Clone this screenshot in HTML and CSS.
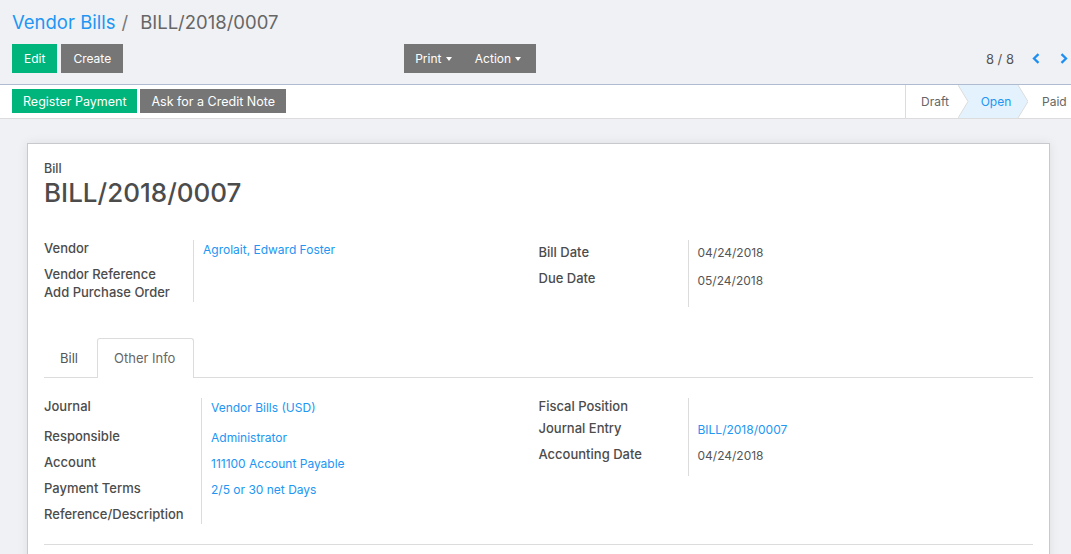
FILE: index.html
```html
<!DOCTYPE html>
<html>
<head>
<meta charset="utf-8">
<link rel="stylesheet" href="styles.css">
</head>
<body>
<div class="cp">
  <div class="crumbs"><a class="crumb-link">Vendor Bills</a><span class="crumb-sep">/</span><span class="crumb-cur">BILL/2018/0007</span></div>
  <div class="cp-row">
    <div class="btns">
      <button class="btn btn-green">Edit</button>
      <button class="btn btn-grey">Create</button>
    </div>
    <div class="sidebar">
      <button class="btn btn-grey dd">Print <span class="caret"></span></button>
      <button class="btn btn-grey dd">Action <span class="caret"></span></button>
    </div>
    <div class="pager">
      <span class="pager-val">8 / 8</span>
      <svg class="chev" width="8" height="11" viewBox="0 0 8 11"><path d="M6.5 1.2 L2 5.5 L6.5 9.8" fill="none" stroke="#1e8ff0" stroke-width="2.3"/></svg>
      <svg class="chev chev-r" width="8" height="11" viewBox="0 0 8 11"><path d="M1.5 1.2 L6 5.5 L1.5 9.8" fill="none" stroke="#1e8ff0" stroke-width="2.3"/></svg>
    </div>
  </div>
</div>
<div class="statusbar">
  <div class="sb-btns">
    <button class="btn btn-green sm">Register Payment</button>
    <button class="btn btn-grey sm">Ask for a Credit Note</button>
  </div>
  <div class="steps">
    <div class="step step-draft">Draft</div>
    <div class="step step-open">
      <svg class="step-bg" width="70" height="33" viewBox="0 0 70 33" preserveAspectRatio="none">
        <polygon points="0,0 60,0 70,16.5 60,33 0,33 10,16.5" fill="#e3f2fd"/>
        <polyline points="0,0 10,16.5 0,33" fill="none" stroke="#dcdcdc" stroke-width="1"/>
        <polyline points="60,0 70,16.5 60,33" fill="none" stroke="#dcdcdc" stroke-width="1"/>
      </svg>
      <span class="step-label">Open</span>
    </div>
    <div class="step step-paid">Paid</div>
  </div>
</div>
<div class="content">
  <div class="sheet">
    <div class="sub-title">Bill</div>
    <div class="title">BILL/2018/0007</div>
    <div class="group">
      <div class="col g1l">
        <div class="lbl">Vendor</div><div class="val link p2">Agrolait, Edward Foster</div>
        <div class="lbl">Vendor Reference</div><div class="val"></div>
        <div class="lbl">Add Purchase Order</div><div class="val"></div>
      </div>
      <div class="col g1r">
        <div class="lbl p4">Bill Date</div><div class="val p5">04/24/2018</div>
        <div class="lbl p4">Due Date</div><div class="val p6">05/24/2018</div>
        <div class="lbl"></div><div class="val"></div>
      </div>
    </div>
    <div class="tabs">
      <div class="tab">Bill</div>
      <div class="tab tab-active">Other Info</div>
    </div>
    <div class="group group2">
      <div class="col g2l">
        <div class="lbl">Journal</div><div class="val link p2">Vendor Bills (USD)</div>
        <div class="lbl">Responsible</div><div class="val link p2">Administrator</div>
        <div class="lbl">Account</div><div class="val link p2">111100 Account Payable</div>
        <div class="lbl">Payment Terms</div><div class="val link p2">2/5 or 30 net Days</div>
        <div class="lbl">Reference/Description</div><div class="val"></div>
      </div>
      <div class="col g2r">
        <div class="lbl">Fiscal Position</div><div class="val"></div>
        <div class="lbl">Journal Entry</div><div class="val link p2">BILL/2018/0007</div>
        <div class="lbl">Accounting Date</div><div class="val p1">04/24/2018</div>
      </div>
    </div>
    <div class="hr"></div>
  </div>
</div>
</body>
</html>
```
FILE: styles.css
```css
* { box-sizing: border-box; }
html, body { margin: 0; padding: 0; }
html { overflow: hidden; }
body {
  background: #f0f1f5;
  font-family: Inter, "Open Sans", Arial, sans-serif;
  color: #4c4c4c;
  width: 1071px;
  height: 554px;
  overflow: hidden;
}
.cp {
  padding: 0 0 11px 12px;
  border-bottom: 1px solid #aebbd0;
}
.crumbs {
  padding-top: 11px;
  height: 44px;
  line-height: 22px;
  font-size: 18.5px;
}
.crumb-link { color: #2196f3; }
.crumb-sep { color: #777; margin: 0 12px 0 6px; }
.crumb-cur { color: #666; }
.cp-row {
  display: flex;
  align-items: center;
  height: 29px;
}
.btns { display: flex; gap: 4px; }
.btn {
  border: 0;
  font-family: Inter, "Open Sans", Arial, sans-serif;
  font-size: 12px;
  color: #fff;
  height: 29px;
  padding: 0 12px;
  cursor: pointer;
}
.btn-green { background: #00b57c; }
.btn-grey { background: #767676; }
.sidebar { display: flex; margin-left: 281px; background: #767676; }
.dd { padding: 0 11px; }
.dd + .dd { padding-left: 12px; padding-right: 15px; }
.caret {
  display: inline-block;
  width: 0; height: 0;
  border-left: 3.5px solid transparent;
  border-right: 3.5px solid transparent;
  border-top: 4px solid #fff;
  vertical-align: middle;
  margin-left: 1px;
  margin-bottom: 2px;
}
.pager {
  margin-left: auto;
  display: flex;
  align-items: center;
  padding-right: 3px;
  font-size: 13px;
  color: #555;
}
.pager-val { margin-right: 18px; }
.chev-r { margin-left: 20px; }
.statusbar {
  background: #fff;
  height: 34px;
  border-bottom: 1px solid #dcdcdc;
  display: flex;
  justify-content: space-between;
}
.sb-btns { display: flex; gap: 3px; padding: 4px 0 0 12px; }
.btn.sm { height: 24px; padding: 0 11px; font-size: 12.5px; }
.steps { display: flex; height: 33px; }
.step {
  font-size: 12px;
  line-height: 33px;
  color: #666;
}
.step-draft {
  border-left: 1px solid #dcdcdc;
  width: 53px;
  padding-left: 15px;
}
.step-open {
  position: relative;
  width: 70px;
  text-align: center;
  color: #2196f3;
}
.step-bg { position: absolute; left: 0; top: 0; }
.step-label { position: relative; padding-left: 6px; }
.step-paid { padding-left: 14px; width: 43px; }
.content {
  padding: 24px 21px 0 27px;
  height: 435px;
  overflow: hidden;
}
.sheet {
  background: #fff;
  border: 1px solid #c8c9cf;
  box-shadow: 0 0 10px rgba(0,0,0,0.08);
  padding: 17px 16px 0 16px;
  height: 440px;
}
.sub-title { font-size: 12.5px; font-weight: 500; line-height: 16px; color: #4c4c4c; }
.title { font-size: 26px; font-weight: 500; line-height: 30px; color: #4c4c4c; margin-top: 1px; }
.group { display: flex; margin-top: 32px; }
.col { width: 495px; display: grid; }
.g1l { grid-template-columns: 150px 1fr; grid-template-rows: 26px 18px 18px; align-self: start; }
.g1r { grid-template-columns: 150px 1fr; grid-template-rows: 26px 26px 15px; align-self: start; }
.g2l { grid-template-columns: 158px 1fr; grid-template-rows: 30px 26px 26px 26px 18px; align-self: start; }
.g2r { grid-template-columns: 150px 1fr; grid-template-rows: 22px 26px 30px; align-self: start; }
.lbl {
  border-right: 1px solid #dcdcdc;
  font-size: 13px;
  font-weight: 500;
  line-height: 16px;
  padding-top: 0;
  color: #4c4c4c;
  white-space: nowrap;
}
.val {
  padding-left: 9px;
  font-size: 12px;
  line-height: 16px;
  padding-top: 1px;
  color: #555;
}
.link { color: #2196f3; }
.val.p1 { padding-top: 2px; }
.val.p2 { padding-top: 2px; }
.lbl.p4 { padding-top: 4px; }
.val.p5 { padding-top: 5px; }
.val.p6 { padding-top: 7px; }
.tabs {
  display: flex;
  margin-top: 31px;
  border-bottom: 1px solid #dcdcdc;
  height: 40px;
}
.tab {
  font-size: 13px;
  line-height: 40px;
  padding: 0 16px;
  color: #555;
  width: 53px;
}
.tab-active {
  width: 97px;
  padding: 0 16px;
  border: 1px solid #dcdcdc;
  border-bottom: 0;
  border-radius: 3px 3px 0 0;
  background: #fff;
  margin-bottom: -1px;
  height: 40px;
  line-height: 38px;
  color: #666;
}
.group2 { margin-top: 20px; }
.hr { border-top: 1px solid #dcdcdc; margin-top: 20px; }
```
